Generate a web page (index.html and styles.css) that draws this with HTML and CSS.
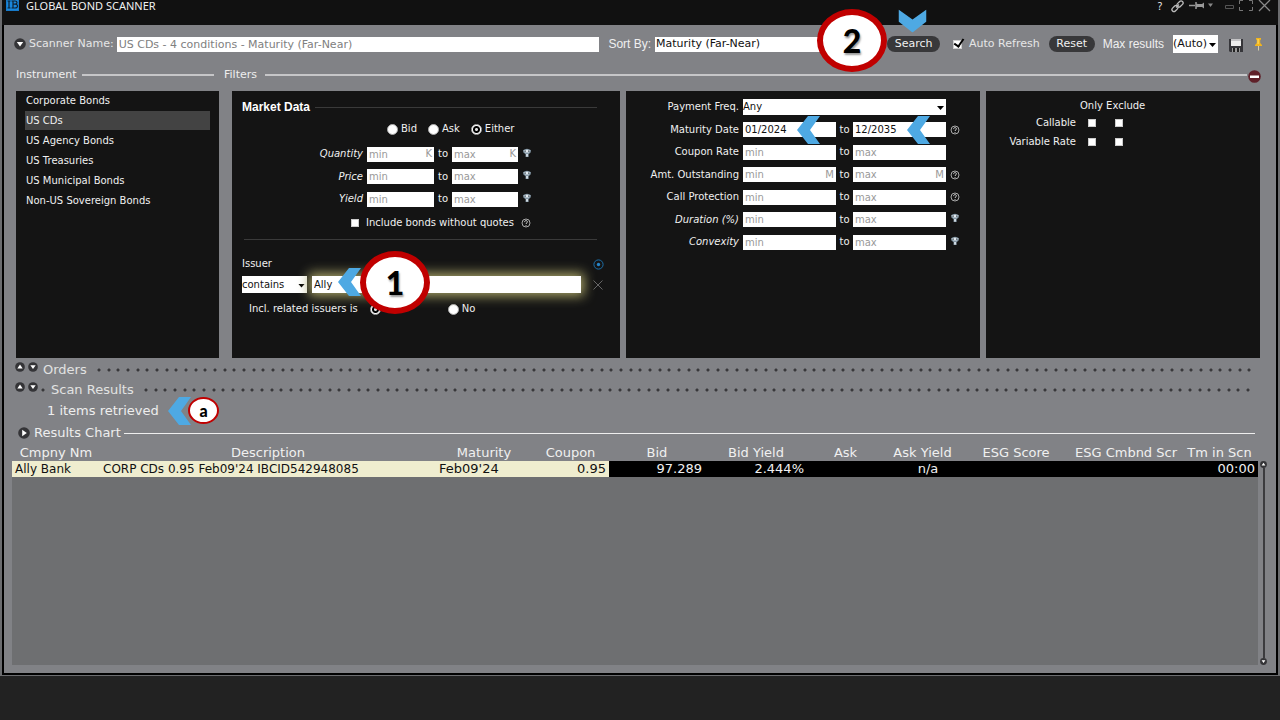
FILE: index.html
```html
<!DOCTYPE html>
<html lang="en">
<head>
<meta charset="utf-8">
<title>Global Bond Scanner</title>
<link rel="stylesheet" href="styles.css">
</head>
<body>
<svg class="defs" aria-hidden="true">
  <symbol id="help" viewBox="0 0 10 10"><circle cx="5" cy="5" r="4" fill="none" stroke="#aaa"/><path d="M3.6 4.1C3.6 2 6.5 2.1 6.4 4 6.3 4.9 5 4.9 5 6M5 7v.9" fill="none" stroke="#ccc"/></symbol>
  <symbol id="filter" viewBox="0 0 10 10"><path d="M1 2.2Q5-.8 9 2.2L8.6 4.6 6.6 6.2V9H3.6V6.2L1.4 4.6Z" fill="#8497a5"/><path d="M2 2.4Q5 1 8 2.4L6.6 4.4H3.4Z" fill="#e3eaf0"/><path d="M2.7 3.1h1.2M6 3.1h1.3" stroke="#1b2730"/><path d="M4.2 6h1.7v2.4H4.2z" fill="#dce5eb"/></symbol>
  <symbol id="down" viewBox="0 0 12 12"><circle cx="6" cy="6" r="5.8" fill="#343437"/><path d="M2.8 4h6.4L6 8.5Z" fill="#fff"/></symbol>
  <symbol id="up" viewBox="0 0 12 12"><circle cx="6" cy="6" r="5.8" fill="#343437"/><path d="M2.8 7.8h6.4L6 3Z" fill="#fff"/></symbol>
  <symbol id="right" viewBox="0 0 12 12"><circle cx="6" cy="6" r="5.8" fill="#343437"/><path d="M4.2 2.8v6.4L8.8 6Z" fill="#fff"/></symbol>
  <symbol id="chevron" viewBox="0 0 23 28"><path d="M11 0h12L13 14l10 14H11L0 14Z" fill="#4ea9e3"/></symbol>
</svg>

<main class="window">
  <header class="titlebar">
    <svg class="logo" viewBox="0 0 13 13"><path d="M0 0h13v13H0z" fill="#1679c9"/><path d="M1 1h11v11H1z" fill="#1987dc"/><path d="M1.500 3h3M3 3v7M1.500 10h3M5.500 3h3.500q2 0 2 1.600t-2 1.600H7M9 6.200q2.500 0 2.500 1.900T9 10H5.500M7 3v7" fill="none" stroke="#10202e" stroke-width="1.200"/></svg>
    <h1 class="titlebar-name">GLOBAL BOND SCANNER</h1>
    <div class="titlebar-tools">
      <button class="plain help-mark" aria-label="Help">?</button>
      <button class="plain" aria-label="Link"><svg width="13" height="12" viewBox="0 0 13 12" fill="none" stroke="#bbb" stroke-width="1.300"><rect x="5.500" y="2" width="7" height="4" rx="2" transform="rotate(-45 9 4)"/><rect x=".5" y="6.500" width="7" height="4" rx="2" transform="rotate(-45 4 8.500)"/><path d="M5 7.500 8 4.500"/></svg></button>
      <button class="plain" aria-label="Pin window"><svg width="25" height="11" viewBox="0 0 25 11"><path d="M0 5.500h6M7 2v7" stroke="#999" stroke-width="1.500"/><path d="M7 3.500l2 .5h4l2-1.500v6L13 7H9l-2 .5Z" fill="#999"/><path d="M19 3.500h5L21.500 7Z" fill="#888"/></svg></button>
      <button class="plain min" aria-label="Minimize"><svg width="9" height="10" viewBox="0 0 9 10"><path d="M.5 4.500h8v3h-8z" fill="none" stroke="#555"/></svg></button>
      <button class="plain" aria-label="Maximize"><svg width="14" height="12" viewBox="0 0 14 12"><path d="M4 .500H.5V4M10 .500h3.500V4M4 10.500H.5V7M10 10.500h3.500V7" fill="none" stroke="#777"/></svg></button>
      <button class="plain" aria-label="Close"><svg width="13" height="12" viewBox="0 0 13 12"><path d="M1 0l11 11M12 0L1 11" stroke="#888" stroke-width="1.300"/></svg></button>
    </div>
  </header>

  <div class="body">
    <form class="toolbar">
      <button type="button" class="plain" aria-label="Collapse scanner"><svg class="ic12"><use href="#down"/></svg></button>
      <label class="name-label" for="scanner">Scanner Name:</label>
      <input class="box name-input" id="scanner" value="US CDs - 4 conditions - Maturity (Far-Near)">
      <label class="arial" for="sort">Sort By:</label>
      <span class="drop sort-drop"><select class="box" id="sort"><option>Maturity (Far-Near)</option></select></span>
      <span class="anchor">
        <button type="button" class="pill search">Search</button>
        <svg class="chev chev-search"><use href="#chevron"/></svg>
        <span class="badge badge-two">2</span>
      </span>
      <label class="auto"><input class="tick marked" type="checkbox" checked>Auto Refresh</label>
      <button type="button" class="pill reset">Reset</button>
      <label class="arial max-label" for="max">Max results</label>
      <span class="drop max-drop"><select class="box" id="max"><option>(Auto)</option></select></span>
      <button type="button" class="plain save" aria-label="Save"><svg width="14" height="15" viewBox="0 0 14 15"><path d="M0 1h14v13H1l-1-1Z" fill="#36363a"/><path d="M2 1h10v7H2z" fill="#eee"/><path d="M2 1h10v2H2z" fill="#c4c4c6"/><path d="M3 10h8v4H3z" fill="#999"/><path d="M4 10h2v4H4zM8 10h2v4H8z" fill="#222"/></svg></button>
      <button type="button" class="plain pin" aria-label="Pin"><svg width="7" height="13" viewBox="0 0 7 13"><path d="M1 0h5v1.500L5.200 2v3L7 7v1H0V7l1.800-2V2L1 1.500Z" fill="#f3b51b"/><path d="M2.600 1h1v5h-1z" fill="#ffe174"/><path d="M3 8h1v4.500H3z" fill="#d9cfaa"/></svg></button>
    </form>

    <div class="criteria">
      <section class="instrument">
        <h2 class="heading">Instrument</h2>
        <ul class="panel list">
          <li>Corporate Bonds</li>
          <li class="chosen">US CDs</li>
          <li>US Agency Bonds</li>
          <li>US Treasuries</li>
          <li>US Municipal Bonds</li>
          <li>Non-US Sovereign Bonds</li>
        </ul>
      </section>

      <section class="filters">
        <h2 class="heading filters-heading">Filters</h2>
        <button class="plain remove" aria-label="Remove filters"><svg width="13" height="13" viewBox="0 0 13 13"><circle cx="6.500" cy="6.500" r="6.300" fill="#5f2029"/><path d="M2 5.500h9v2.500H2z" fill="#fff"/></svg></button>
        <div class="panels">
          <div class="panel market">
            <h3 class="market-title">Market Data</h3>
            <div class="sides">
              <label><input class="dot" type="radio" name="side">Bid</label>
              <label><input class="dot" type="radio" name="side">Ask</label>
              <label><input class="dot" type="radio" name="side" checked>Either</label>
            </div>
            <div class="ranges market-ranges">
              <label class="em" for="q1">Quantity</label><span class="field"><input id="q1" placeholder="min">K</span><span>to</span><span class="field"><input aria-label="Quantity max" placeholder="max">K</span><svg class="ic10 raised"><use href="#filter"/></svg>
              <label class="em" for="p1">Price</label><span class="field"><input id="p1" placeholder="min"></span><span>to</span><span class="field"><input aria-label="Price max" placeholder="max"></span><svg class="ic10 raised"><use href="#filter"/></svg>
              <label class="em" for="y1">Yield</label><span class="field"><input id="y1" placeholder="min"></span><span>to</span><span class="field"><input aria-label="Yield max" placeholder="max"></span><svg class="ic10 raised"><use href="#filter"/></svg>
            </div>
            <label class="include"><input class="tick" type="checkbox">Include bonds without quotes<svg class="ic10"><use href="#help"/></svg></label>
            <hr class="rule">
            <div class="issuer-head"><label for="issuer">Issuer</label><button class="plain" aria-label="Issuer options"><svg width="11" height="11" viewBox="0 0 11 11"><circle cx="5.500" cy="5.500" r="4.600" fill="none" stroke="#1b6ea8"/><circle cx="5.500" cy="5.500" r="1.700" fill="#2785c8"/></svg></button></div>
            <div class="issuer-row">
              <span class="drop contains-drop"><select class="box" aria-label="Match"><option>contains</option></select></span>
              <span class="anchor issuer-wrap"><input class="box issuer-input" id="issuer" value="Ally"><svg class="chev chev-issuer"><use href="#chevron"/></svg><span class="badge badge-one">1</span></span>
              <button class="plain" aria-label="Clear issuer"><svg width="10" height="10" viewBox="0 0 10 10"><path d="M.5.5l9 9M9.500.5l-9 9" stroke="#666"/></svg></button>
            </div>
            <div class="related"><span>Incl. related issuers is</span><label><input class="dot" type="radio" name="rel" checked>Yes</label><label class="no"><input class="dot" type="radio" name="rel">No</label></div>
          </div>

          <div class="panel bond">
            <div class="ranges bond-ranges">
              <label for="freq">Payment Freq.</label><span class="drop freq-drop"><select class="box" id="freq"><option>Any</option></select></span><span></span>
              <label for="m1">Maturity Date</label><span class="field anchor"><input class="filled" id="m1" value="01/2024"><svg class="chev chev-date"><use href="#chevron"/></svg></span><span>to</span><span class="field anchor"><input class="filled" aria-label="Maturity to" value="12/2035"><svg class="chev chev-date"><use href="#chevron"/></svg></span><svg class="ic10"><use href="#help"/></svg>
              <label for="c1">Coupon Rate</label><span class="field"><input id="c1" placeholder="min"></span><span>to</span><span class="field"><input aria-label="Coupon max" placeholder="max"></span><span></span>
              <label for="a1">Amt. Outstanding</label><span class="field"><input id="a1" placeholder="min">M</span><span>to</span><span class="field"><input aria-label="Amount max" placeholder="max">M</span><svg class="ic10"><use href="#help"/></svg>
              <label for="k1">Call Protection</label><span class="field"><input id="k1" placeholder="min"></span><span>to</span><span class="field"><input aria-label="Call protection max" placeholder="max"></span><svg class="ic10"><use href="#help"/></svg>
              <label class="em" for="d1">Duration (%)</label><span class="field"><input id="d1" placeholder="min"></span><span>to</span><span class="field"><input aria-label="Duration max" placeholder="max"></span><svg class="ic10 raised"><use href="#filter"/></svg>
              <label class="em" for="v1">Convexity</label><span class="field"><input id="v1" placeholder="min"></span><span>to</span><span class="field"><input aria-label="Convexity max" placeholder="max"></span><svg class="ic10 raised"><use href="#filter"/></svg>
            </div>
          </div>

          <div class="panel flags">
            <div class="flag-head">Only Exclude</div>
            <div class="flag-row"><span>Callable</span><input class="tick" type="checkbox" aria-label="Only callable"><input class="tick" type="checkbox" aria-label="Exclude callable"></div>
            <div class="flag-row"><span>Variable Rate</span><input class="tick" type="checkbox" aria-label="Only variable rate"><input class="tick" type="checkbox" aria-label="Exclude variable rate"></div>
          </div>
        </div>
      </section>
    </div>

    <div class="splitter">
      <button class="plain" aria-label="Expand orders"><svg class="ic10"><use href="#up"/></svg></button><button class="plain" aria-label="Collapse orders"><svg class="ic10"><use href="#down"/></svg></button>
      <h2 class="split-name">Orders</h2><span class="dots"></span>
    </div>
    <div class="splitter">
      <button class="plain" aria-label="Expand results"><svg class="ic10"><use href="#up"/></svg></button><button class="plain" aria-label="Collapse results"><svg class="ic10"><use href="#down"/></svg></button>
      <span class="dots one"></span><h2 class="split-name">Scan Results</h2><span class="dots"></span>
    </div>
    <div class="status"><span class="anchor">1 items retrieved<svg class="chev chev-status"><use href="#chevron"/></svg><span class="badge badge-a">a</span></span></div>
    <div class="chart-head"><button class="plain" aria-label="Show results chart"><svg class="ic12"><use href="#right"/></svg></button><h2 class="heading chart-title">Results Chart</h2></div>

    <div class="results">
      <table class="grid">
        <colgroup><col class="w-name"><col class="w-desc"><col class="w-wide"><col class="w-base"><col class="w-wide"><col class="w-yield"><col class="w-base"><col class="w-base"><col class="w-esg"><col class="w-esg"><col class="w-base"></colgroup>
        <thead><tr><th>Cmpny Nm</th><th>Description</th><th>Maturity</th><th>Coupon</th><th>Bid</th><th>Bid Yield</th><th>Ask</th><th>Ask Yield</th><th>ESG Score</th><th>ESG Cmbnd Scr</th><th>Tm in Scn</th></tr></thead>
        <tbody><tr><td class="key small">Ally Bank</td><td class="key small">CORP CDs 0.95 Feb09'24 IBCID542948085</td><td class="key">Feb09'24</td><td class="key num">0.95</td><td class="num">97.289</td><td class="num">2.444%</td><td></td><td class="mid">n/a</td><td></td><td></td><td class="num">00:00</td></tr></tbody>
      </table>
      <div class="scroll"><svg class="ic6"><use href="#up"/></svg><span class="track"></span><svg class="ic6"><use href="#down"/></svg></div>
    </div>
  </div>
</main>
</body>
</html>
```
FILE: styles.css
```css
* { box-sizing: border-box; }
body {
  margin: 0;
  min-height: 100vh;
  padding-bottom: 45px;
  display: flex;
  background: #222;
  color: #f0f0f0;
  font-family: "DejaVu Sans", sans-serif;
  font-size: 10px;
  line-height: 14px;
}
h1, h2, h3, ul { margin: 0; padding: 0; font-size: inherit; font-weight: normal; list-style: none; }
button, input, select { font: inherit; color: inherit; margin: 0; }
svg { display: block; flex: none; overflow: visible; }
.defs { position: absolute; width: 0; height: 0; }
.plain { border: 0; padding: 0; background: none; flex: none; }
.ic6 { width: 7px; height: 7px; }
.ic10 { width: 10px; height: 10px; }
.ic12 { width: 12px; height: 12px; }
.em { font-style: italic; }
.anchor { position: relative; }

.window {
  flex: 1;
  min-width: 0;
  display: flex;
  flex-direction: column;
  background: #818286;
  border: solid #000;
  border-width: 0 2px 2px;
  margin: 0 2px;
  box-shadow: 1px 0 0 1px #6b6c6f, -1px 0 0 1px #6b6c6f;
}
.titlebar {
  height: 25px;
  flex: none;
  display: flex;
  align-items: flex-start;
  gap: 7px;
  margin: 0 -2px;
  padding: 0 7px 0 4px;
  background: #111;
  font-family: "Noto Sans", sans-serif;
  font-size: 11px;
  line-height: 10px;
}
.logo { width: 13px; height: 13px; margin-top: -2px; }
.titlebar-name { flex: 1; line-height: 12px; }
.titlebar-tools { display: flex; align-items: center; gap: 5px; height: 11px; }
.help-mark { font-size: 10px; margin-right: 4px; }
.min { margin-left: 6px; }

.body { flex: 1; display: flex; flex-direction: column; padding: 10px 10px 8px 8px; }

.box {
  border: 0;
  border-radius: 0;
  padding: 0 2px;
  height: 15px;
  background: #fff;
  color: #111;
  appearance: none;
  width: 100%;
  min-width: 0;
  display: block;
}
.drop { position: relative; display: block; flex: none; }
.drop::after {
  content: "";
  position: absolute;
  right: 2px;
  top: 50%;
  width: 7px;
  height: 4px;
  margin-top: -1px;
  background: #000;
  clip-path: polygon(0 0, 100% 0, 50% 100%);
  pointer-events: none;
}
.drop .box { padding: 0; }

.toolbar { display: flex; align-items: center; height: 18px; padding: 0 4px 0 2px; font-size: 11px; }
.name-label { margin: 0 3px; color: #e6e6e6; }
.name-input { flex: 1; color: #808080; margin-right: 9px; font-size: 11px; }
.arial { font-family: "Liberation Sans", sans-serif; font-size: 12px; }
.sort-drop { width: 228px; margin: 0 4px; }
.sort-drop .box { padding-left: 1px; }
.sort-drop::after { display: none; }
.pill { border: 0; border-radius: 8px; height: 16px; padding: 0; background: #38383a; color: #f0f0f0; line-height: 16px; display: block; }
.search { width: 53px; }
.reset { width: 46px; }
.auto { display: flex; align-items: center; gap: 7px; margin: 0 9px 0 13px; color: #e6e6e6; }
.max-label { margin: 0 9px 0 8px; }
.max-drop { width: 45px; }
.max-drop .box { height: 18px; }
.save { margin: 3px 12px 0 11px; }

.tick { appearance: none; width: 8px; height: 8px; background: #fff; flex: none; border: 1px solid #ccc; position: relative; }
.marked { width: 9px; height: 9px; }
.marked:checked::after {
  content: "";
  position: absolute;
  left: 2px;
  top: -4px;
  width: 4px;
  height: 8px;
  border: solid #000;
  border-width: 0 2px 2px 0;
  transform: rotate(35deg);
}
.dot { appearance: none; width: 11px; height: 11px; border-radius: 50%; border: 1px solid #aaa; background: #fff; flex: none; }
.dot:checked { background: radial-gradient(circle, #ddd 0 1px, #000 2px 3px, #fff 4px); }

.badge {
  position: absolute;
  display: flex;
  align-items: center;
  justify-content: center;
  width: 70px;
  height: 63px;
  border: 6px solid #c00000;
  border-radius: 50%;
  background: #fff;
  color: #000;
  font-family: Lato, sans-serif;
  font-weight: 900;
  font-size: 32px;
  text-shadow: 1px 2px 2px #999;
  z-index: 2;
}
.badge-two { left: -70px; top: -27px; }
.badge-one { left: 48px; top: -25px; }
.badge-a { left: 141px; top: -6px; width: 31px; height: 27px; border-width: 2px; font-size: 16px; text-shadow: none; }
.chev { position: absolute; width: 23px; height: 28px; z-index: 1; }
.chev-search { left: 14px; top: -29px; transform: rotate(-90deg); }
.chev-issuer { left: 26px; top: -8px; }
.chev-date { left: 54px; top: -6px; }
.chev-status { left: 121px; top: -6px; }

.criteria { display: grid; grid-template-columns: 203fr 1028fr; gap: 13px; padding: 14px 6px 0 4px; }
.heading { display: flex; align-items: center; height: 16px; gap: 5px; margin-bottom: 8px; font-size: 11px; color: #eee; }
.heading::after { content: ""; flex: 1; height: 2px; background: #c6c6c8; }
.instrument, .filters { display: flex; flex-direction: column; position: relative; min-width: 0; }
.instrument .heading { padding-right: 5px; }
.filters-heading { margin-left: -8px; padding-right: 13px; gap: 8px; }
.remove { position: absolute; right: -1px; top: 3px; }
.panel { background: #141414; min-height: 267px; }
.list { padding: 0 9px; }
.list li { line-height: 19px; margin-bottom: 1px; padding-left: 1px; }
.list .chosen { background: #434343; }
.panels { display: grid; grid-template-columns: 388fr 354fr 274fr; gap: 6px; }

.market { padding: 9px 23px 0 10px; }
.market-title { display: flex; align-items: center; gap: 5px; font: bold 12px/14px "Liberation Sans", sans-serif; color: #fff; }
.market-title::after { content: ""; flex: 1; height: 1px; background: #3a3a3a; }
.sides { display: flex; gap: 11px; margin: 8px 0 7px 145px; }
.sides label, .related label { display: flex; align-items: center; gap: 3px; }
.ranges { display: grid; align-items: center; grid-auto-rows: 22px 23px; }
.ranges > label { text-align: right; padding-right: 4px; }
.ranges > span:not(.field):not(.drop) { text-align: center; }
.market-ranges { grid-template-columns: 125px 67px 18px 66px 18px; }
.ranges > svg { justify-self: center; }
.ranges .raised { align-self: start; margin-top: 5px; }
.field { display: flex; align-items: center; height: 15px; background: #fff; color: #999; padding: 0 2px; }
.field input { border: 0; padding: 0; background: none; width: 100%; min-width: 0; height: 15px; }
.field input::placeholder { color: #999; opacity: 1; }
.field .filled { color: #111; }
.include { display: flex; align-items: center; margin: 6px 0 0 109px; }
.include .tick { margin-right: 7px; }
.include svg { margin-left: 7px; }
.rule { border: 0; height: 1px; background: #3a3a3a; margin: 9px 0 17px 2px; }
.issuer-head { display: flex; justify-content: space-between; margin-right: -7px; }
.issuer-row { display: flex; align-items: center; gap: 5px; margin: 5px -6px 0 0; }
.contains-drop { width: 65px; }
.issuer-row .box { height: 17px; }
.issuer-wrap { flex: 1; margin-right: 7px; }
.issuer-input { box-shadow: 0 0 12px 3px #a9a468; }
.related { display: flex; align-items: center; margin: 9px 0 0 7px; gap: 12px; }
.related .no { margin-left: 36px; }

.bond { padding: 5px 17px 0 4px; }
.bond-ranges { grid-template-columns: minmax(100px, 1fr) 93px 17px 93px 17px; }
.freq-drop { grid-column: span 3; }
.freq-drop .box { height: 16px; }

.flags { padding: 8px 0 0; }
.flag-head { padding-left: 94px; }
.flag-row { display: flex; align-items: center; height: 19px; }
.flag-row span { width: 90px; text-align: right; margin-right: 12px; }
.flag-row .tick + .tick { margin-left: 19px; }

.splitter { display: flex; align-items: center; height: 20px; padding: 0 10px 0 3px; }
.criteria + .splitter { margin-top: 2px; }
.splitter .plain { margin: 0 3px 6px 0; }
.split-name { font-size: 13px; margin: 0 10px 0 2px; color: #e2e2e2; }
.dots {
  flex: 1;
  height: 4px;
  background: radial-gradient(circle at 2px 2px, #38383a 1px, #38383a00 2px), radial-gradient(circle at 12px 2px, #38383a 1px, #38383a00 2px), radial-gradient(circle at 21px 2px, #38383a 1px, #38383a00 2px);
  background-size: 29px 4px;
}
.one { flex: none; width: 5px; }
.one + .split-name { margin-left: 5px; }
.status { font-size: 13px; line-height: 18px; margin: 2px 0 3px 35px; color: #eee; }
.chart-head { display: flex; align-items: center; gap: 4px; padding: 0 11px 0 6px; height: 20px; }
.chart-title { flex: 1; font-size: 13px; margin: 0; gap: 3px; }
.chart-title::after { height: 1px; background: #eee; }

.results { flex: 1; display: grid; grid-template-columns: 1fr auto; gap: 2px; background: linear-gradient(#6e6f71, #6e6f71) 0 34px / calc(100% - 8px) 100% no-repeat; }
.grid { table-layout: fixed; width: 100%; border-collapse: collapse; font-size: 13px; align-self: start; }
.grid th { font-weight: normal; padding: 2px 0 0; height: 18px; line-height: 16px; white-space: nowrap; }
.grid td { background: #000; height: 16px; padding: 0 3px; line-height: 16px; white-space: nowrap; }
.grid .key { background: #efedcf; color: #111; }
.grid .small { font-size: 12px; }
.grid .num { text-align: right; }
.grid .mid { text-align: center; padding-left: 14px; }
.w-name { width: 88px; }
.w-desc { width: 336px; }
.w-wide { width: 96px; }
.w-base { width: 77px; }
.w-yield { width: 102px; }
.w-esg { width: 110px; }
.scroll { display: flex; flex-direction: column; align-items: center; padding-top: 18px; width: 7px; margin-right: -1px; }
.track { flex: 1; width: 2px; background: #3b3b3e; }
```
